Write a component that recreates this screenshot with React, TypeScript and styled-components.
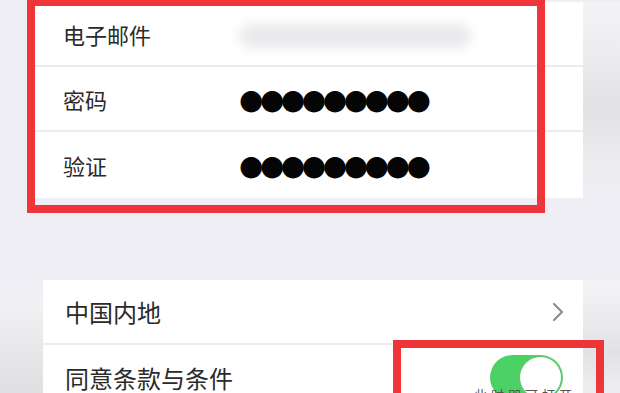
import React from 'react';
import styled, { createGlobalStyle } from 'styled-components';

const GlobalStyle = createGlobalStyle`
    html, body {
        margin: 0;
        padding: 0;
        background: #efeef4;
    }
    body {
        font-family: "Noto Sans CJK SC", "Noto Sans", sans-serif;
    }
`;

const Page = styled.div`
    position: relative;
    width: 620px;
    height: 393px;
    overflow: hidden;
    background: #efeef4;
`;

const Section = styled.div<{ $top: number; $height: number }>`
    display: flex;
    margin-top: ${p => p.$top}px;
    height: ${p => p.$height}px;
`;

const Shade = styled.div<{ $width?: number; $side: 'left' | 'right' }>`
    flex: ${p => (p.$width ? `0 0 ${p.$width}px` : '1')};
    background: ${p =>
        p.$side === 'right'
            ? 'linear-gradient(180deg, #f4f4f6 0%, #ebebed 30%, #e2e2e4 55%, #ececee 80%, #efeef4 100%)'
            : 'linear-gradient(180deg, #efeef4 0%, #f1f1f3 20%, #e6e6e8 60%, #dcdcde 100%)'};
`;

const Card = styled.div<{ $width: number; $left?: number }>`
    flex: 0 0 ${p => p.$width}px;
    margin-left: ${p => p.$left || 0}px;
    background: #ffffff;
    display: flex;
    flex-direction: column;
`;

const Row = styled.div<{ $height: number; $pad: number; $divider?: boolean }>`
    position: relative;
    display: flex;
    align-items: center;
    height: ${p => p.$height}px;
    padding-left: ${p => p.$pad}px;
    padding-right: 19px;
    box-sizing: border-box;
    border-bottom: ${p => (p.$divider ? '2px solid #ececef' : 'none')};
`;

const Label = styled.div<{ $size: number; $width?: number }>`
    flex: 0 0 ${p => (p.$width ? `${p.$width}px` : 'auto')};
    font-size: ${p => p.$size}px;
    color: #2a2a2a;
    white-space: nowrap;
`;

const BlurValue = styled.div`
    width: 232px;
    height: 24px;
    border-radius: 12px;
    background: #e9e9ec;
    filter: blur(6px);
    margin-top: 4px;
`;

const Dots = styled.div`
    font-family: "DejaVu Sans", sans-serif;
    font-size: 28px;
    letter-spacing: -3.5px;
    color: #050505;
    line-height: 1;
    margin-top: 2px;
`;

const Spacer = styled.div`
    flex: 1;
`;

const Chevron = styled.svg`
    width: 12px;
    height: 20px;
`;

const Switch = styled.div<{ $on: boolean }>`
    position: relative;
    width: 73px;
    height: 45px;
    border-radius: 23px;
    background: ${p => (p.$on ? '#4cd264' : '#e5e5ea')};
    margin-right: 1px;
`;

const Knob = styled.div`
    position: absolute;
    top: 2px;
    right: 2px;
    width: 41px;
    height: 41px;
    border-radius: 50%;
    background: #ffffff;
    box-shadow: 0 0 0 1.5px rgba(120, 190, 130, 0.55);
`;

const Mark = styled.div<{ $x: number; $y: number; $w: number; $h: number }>`
    position: absolute;
    left: ${p => p.$x}px;
    top: ${p => p.$y}px;
    width: ${p => p.$w}px;
    height: ${p => p.$h}px;
    border: 8px solid #ee3537;
    box-sizing: border-box;
    pointer-events: none;
`;

const Caption = styled.div`
    position: absolute;
    left: 474px;
    top: 385px;
    font-size: 13px;
    color: #555;
    letter-spacing: 4px;
    white-space: nowrap;
`;

const DOTS = '●●●●●●●●●';

function App(): JSX.Element {
    return (
        <>
            <GlobalStyle />
            <Page>
                <Section $top={2} $height={196}>
                    <Card $width={550} $left={33}>
                        <Row $height={65} $pad={30} $divider>
                            <Label $size={22} $width={176}>电子邮件</Label>
                            <BlurValue />
                        </Row>
                        <Row $height={65} $pad={30} $divider>
                            <Label $size={22} $width={176}>密码</Label>
                            <Dots>{DOTS}</Dots>
                        </Row>
                        <Row $height={66} $pad={30}>
                            <Label $size={22} $width={176}>验证</Label>
                            <Dots>{DOTS}</Dots>
                        </Row>
                    </Card>
                    <Shade $side="right" />
                </Section>
                <Section $top={82} $height={130}>
                    <Shade $side="left" $width={43} />
                    <Card $width={540}>
                        <Row $height={65} $pad={22} $divider>
                            <Label $size={24}>中国内地</Label>
                            <Spacer />
                            <Chevron viewBox="0 0 12 20">
                                <path d="M2 2 L10 10 L2 18" fill="none" stroke="#8e8e93" strokeWidth="2.2" strokeLinecap="round" strokeLinejoin="round" />
                            </Chevron>
                        </Row>
                        <Row $height={65} $pad={22}>
                            <Label $size={24}>同意条款与条件</Label>
                            <Spacer />
                            <Switch $on>
                                <Knob />
                            </Switch>
                        </Row>
                    </Card>
                    <Shade $side="right" />
                </Section>
                <Mark $x={27} $y={-2} $w={518} $h={215} />
                <Mark $x={393} $y={340} $w={211} $h={70} />
                <Caption>此时即可打开</Caption>
            </Page>
        </>
    );
}

export default App;
